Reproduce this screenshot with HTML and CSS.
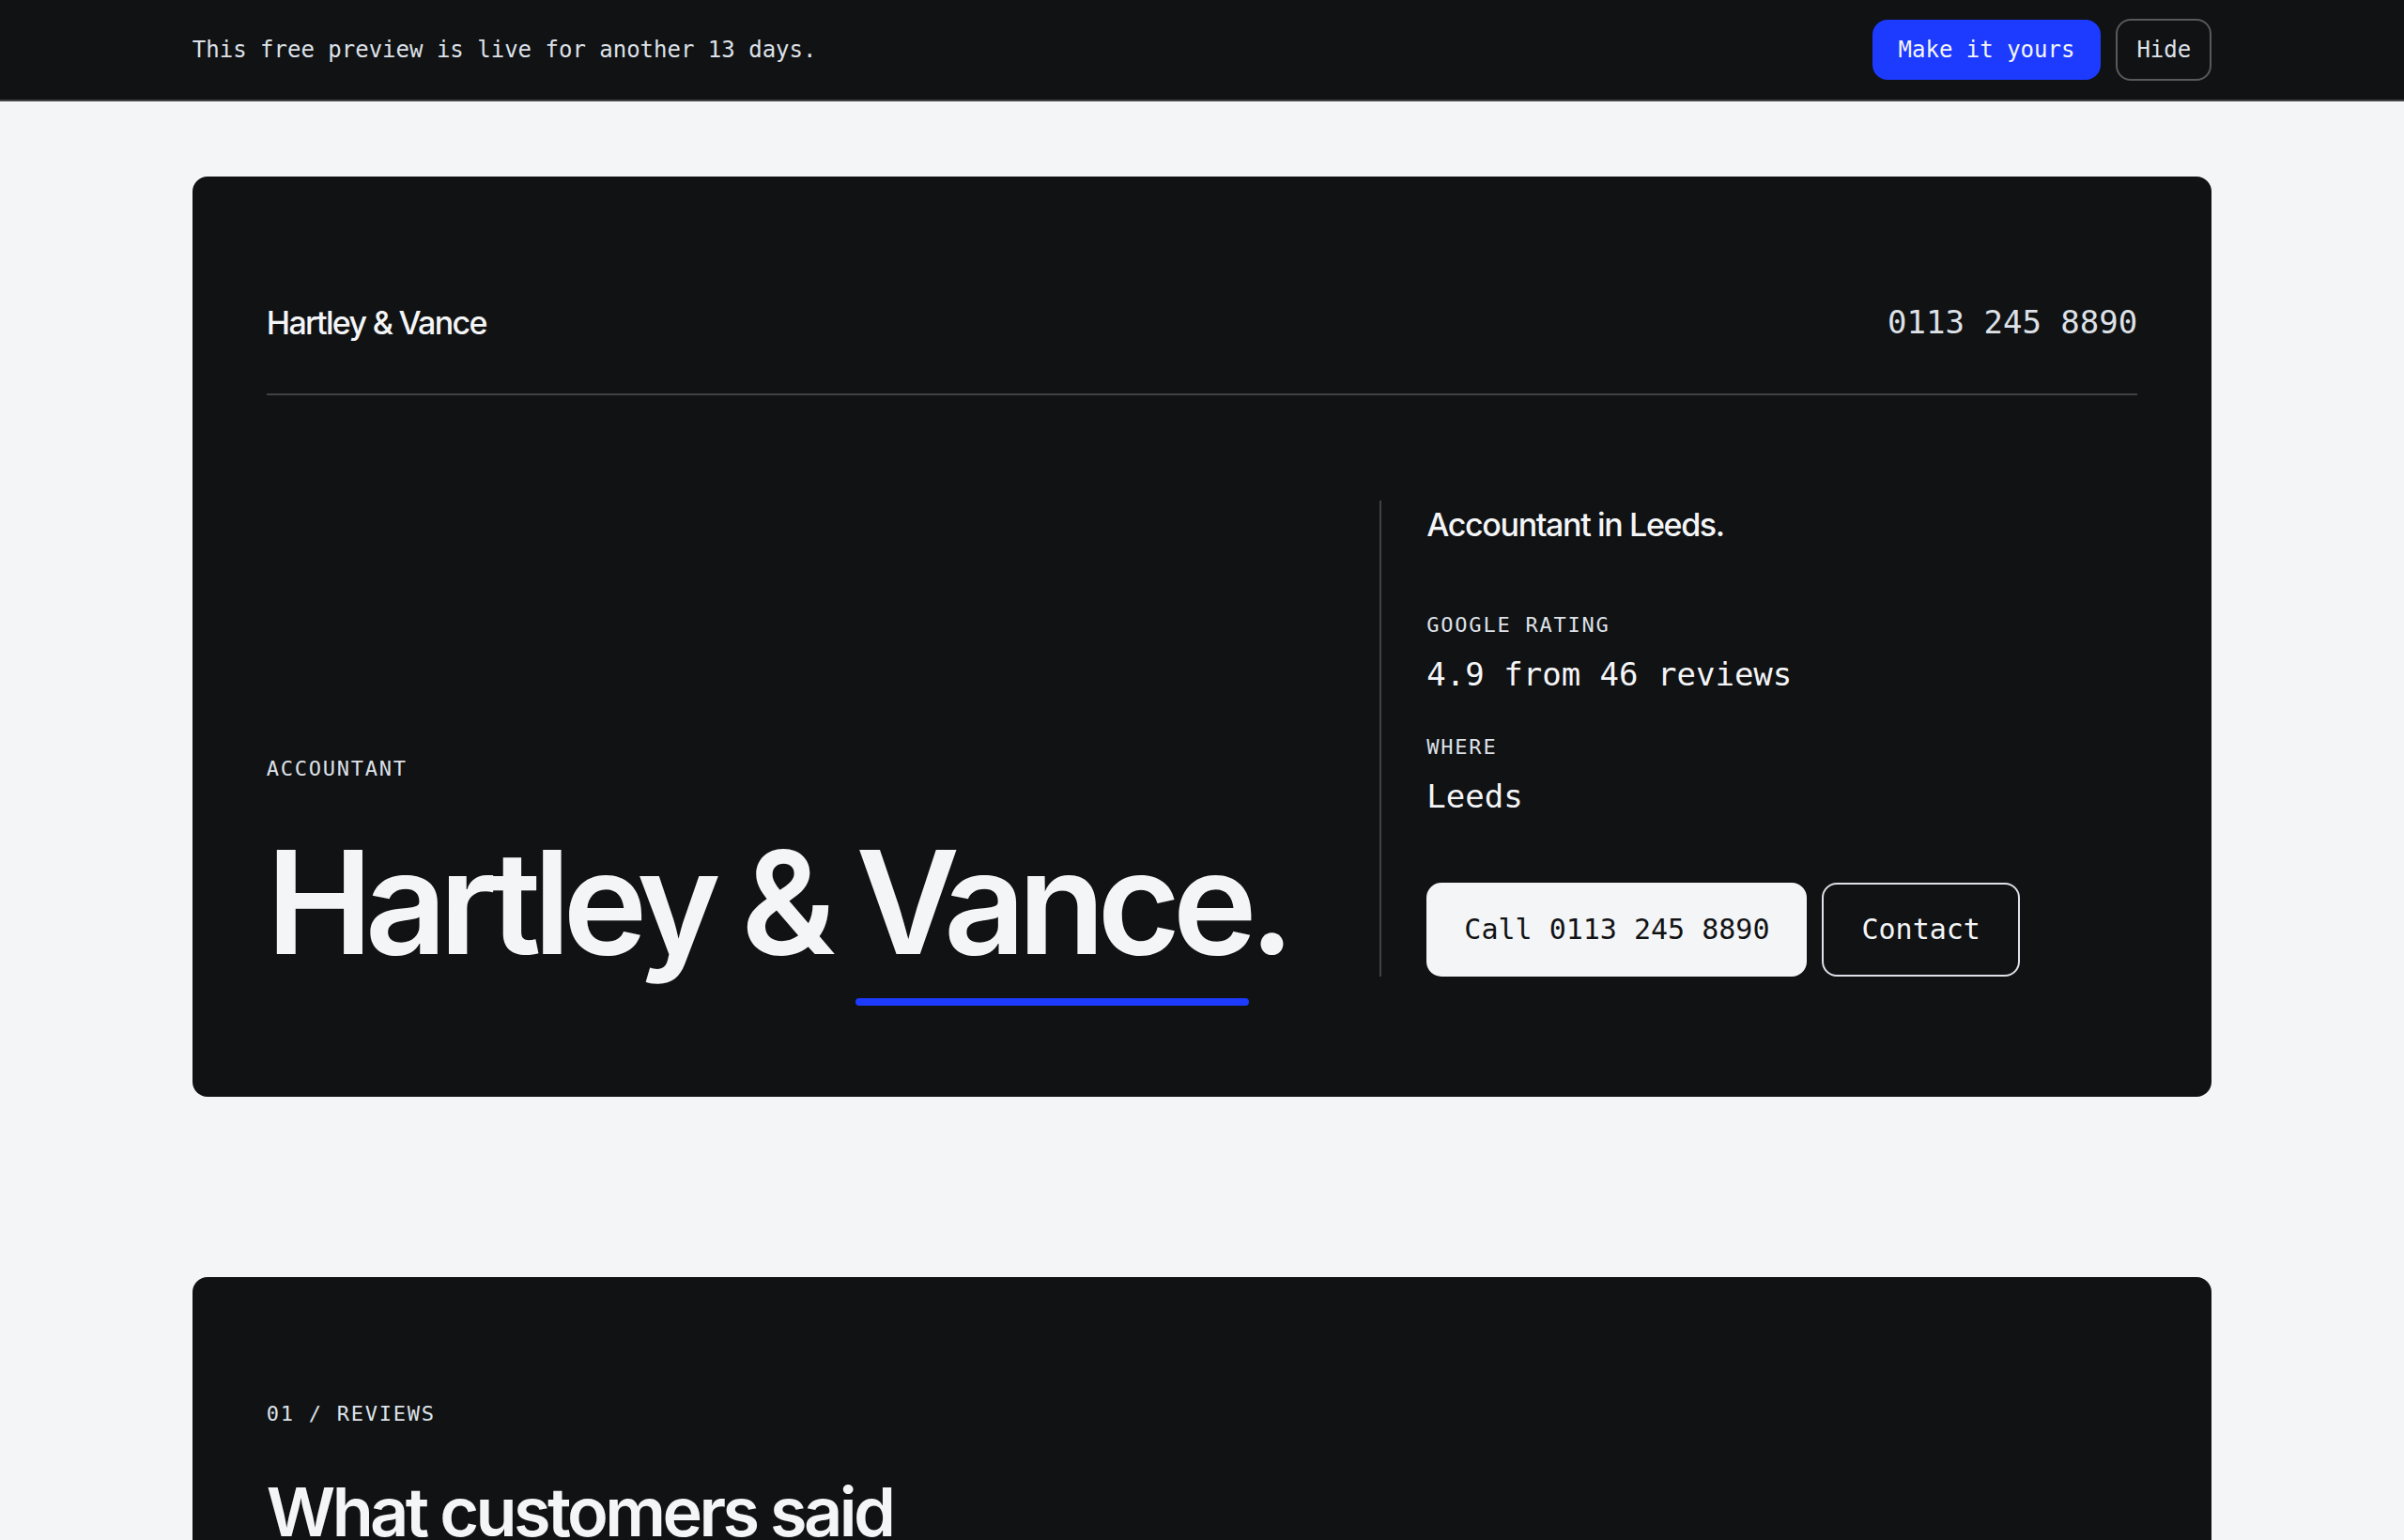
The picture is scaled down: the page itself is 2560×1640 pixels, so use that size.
FILE: index.html
```html
<!DOCTYPE html>
<html lang="en">
<head>
    <meta charset="UTF-8">
    <meta name="viewport" content="width=device-width, initial-scale=1">
    <title>Hartley &amp; Vance - Accountant in Leeds</title>
    <link rel="stylesheet" href="styles.css">
</head>
<body>

<div class="preview-bar">
    <p>This free preview is live for another 13 days.</p>
    <div class="preview-actions">
        <a class="preview-claim" href="#claim">Make it yours</a>
        <button class="preview-hide" type="button">Hide</button>
    </div>
</div>

<main class="page">
    <div class="panel">
        <header class="site-header">
            <a class="site-name" href="#">Hartley &amp; Vance</a>
            <a class="site-phone" href="tel:01132458890">0113 245 8890</a>
        </header>

        <div class="hero">
            <div class="hero-title">
                <p class="label">Accountant</p>
                <h1>Hartley &amp; <span class="underlined">Vance</span>.</h1>
            </div>

            <div class="hero-info">
                <p class="summary">Accountant in Leeds.</p>
                <dl class="facts">
                    <div>
                        <dt class="label">Google rating</dt>
                        <dd>4.9 from 46 reviews</dd>
                    </div>
                    <div>
                        <dt class="label">Where</dt>
                        <dd>Leeds</dd>
                    </div>
                </dl>
                <div class="hero-actions">
                    <a class="btn btn-solid" href="tel:01132458890">Call 0113 245 8890</a>
                    <a class="btn btn-outline" href="#contact">Contact</a>
                </div>
            </div>
        </div>
    </div>

    <section class="panel" id="reviews">
        <p class="label">01 / Reviews</p>
        <h2>What customers said</h2>
    </section>
</main>

</body>
</html>
```
FILE: styles.css
```css
:root {
    --ink: #111214;
    --paper: #f4f5f7;
    --soft: #dde1e8;
    --line: #414244;
    --blue: #1c3bff;
    --sans: Inter, "Liberation Sans", sans-serif;
    --mono: "DejaVu Sans Mono", "Liberation Mono", monospace;
}

* {
    box-sizing: border-box;
}
body, h1, h2, p, dl, dd {
    margin: 0;
}
body {
    background-color: var(--paper);
    color: var(--paper);
    font-family: var(--sans);
    -webkit-font-smoothing: antialiased;
}
a {
    color: inherit;
    text-decoration: none;
}

/* preview bar */
.preview-bar {
    display: flex;
    align-items: center;
    justify-content: space-between;
    padding: 20px 8%;
    background-color: var(--ink);
    border-bottom: 2px solid var(--line);
    color: var(--soft);
    font-family: var(--mono);
    font-size: 24px;
    line-height: 36px;
}
.preview-actions {
    display: flex;
    align-items: center;
    gap: 16px;
}
.preview-claim {
    padding: 14px 28px;
    border-radius: 16px;
    background-color: var(--blue);
    color: var(--paper);
}
.preview-hide {
    padding: 13px 20px;
    border: 2px solid #58595b;
    border-radius: 16px;
    background: none;
    color: inherit;
    font: inherit;
}

/* panels */
.page {
    display: flex;
    flex-direction: column;
    gap: 192px;
    padding: 80px 8%;
}
.panel {
    padding: 128px 79px;
    border-radius: 16px;
    background-color: var(--ink);
}
.label {
    color: var(--soft);
    font-family: var(--mono);
    font-size: 22px;
    line-height: 35px;
    letter-spacing: 0.08em;
    text-transform: uppercase;
}

.site-header {
    display: flex;
    justify-content: space-between;
    padding-bottom: 48px;
    border-bottom: 2px solid var(--line);
    font-size: 34px;
    line-height: 55px;
}
.site-name {
    font-weight: 500;
    letter-spacing: -0.05em;
}
.site-phone {
    color: var(--soft);
    font-family: var(--mono);
}

/* hero */
.hero {
    display: grid;
    grid-template-columns: 7fr 5fr;
    gap: 56px;
    padding-top: 112px;
}
.hero-title {
    align-self: end;
}
h1 {
    margin-top: 46px;
    font-size: 152px;
    font-weight: 600;
    line-height: 158px;
    letter-spacing: -0.055em;
    white-space: nowrap;
}
.underlined {
    display: inline-block;
    position: relative;
}
.underlined::after {
    content: "";
    position: absolute;
    left: 0;
    right: 0;
    bottom: -31px;
    height: 8px;
    border-radius: 4px;
    background-color: var(--blue);
}
.hero-info {
    padding-left: 48px;
    border-left: 2px solid var(--line);
}
.summary {
    font-size: 34px;
    font-weight: 500;
    line-height: 51px;
    letter-spacing: -0.04em;
}
.facts {
    display: grid;
    gap: 32px;
    margin: 64px 0;
}
.facts dd {
    margin-top: 8px;
    font-family: var(--mono);
    font-size: 34px;
    line-height: 55px;
}
.hero-actions {
    display: flex;
    gap: 16px;
}
.btn {
    padding: 24px 40px;
    border: 2px solid var(--soft);
    border-radius: 16px;
    font-family: var(--mono);
    font-size: 30px;
    line-height: 48px;
}
.btn-solid {
    padding: 26px 40px;
    border: none;
    background-color: var(--paper);
    color: var(--ink);
}

h2 {
    margin-top: 48px;
    font-size: 72px;
    font-weight: 600;
    line-height: 78px;
    letter-spacing: -0.05em;
}
```
